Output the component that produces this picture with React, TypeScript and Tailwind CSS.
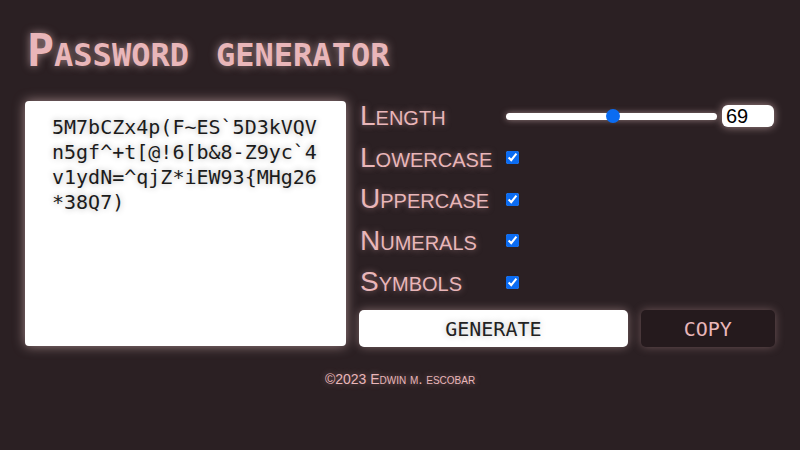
import { useState } from 'react'

const PASSWORD = '5M7bCZx4p(F~ES`5D3kVQVn5gf^+t[@!6[b&8-Z9yc`4v1ydN=^qjZ*iEW93{MHg26*38Q7)'

const OPTIONS = ['Lowercase', 'Uppercase', 'Numerals', 'Symbols']

export default function App() {
    const [length, setLength] = useState(69)

    return (
        <div className="min-h-screen w-full bg-[#2b2023] px-[25px] pt-[28px] text-[#e9b6b9] font-['Liberation_Sans',Arial,sans-serif]">
            <h1 className="pl-[2px] text-[45px] font-bold leading-none [font-variant-caps:small-caps] font-['DejaVu_Sans_Mono',monospace] [text-shadow:0_0_8px_rgba(240,200,202,0.6)]">
                Password generator
            </h1>

            <div className="mt-[28px] flex gap-[13px]">
                <textarea
                    readOnly
                    value={PASSWORD}
                    className="h-[245px] w-[321px] resize-none overflow-hidden rounded-[4px] bg-white pl-[27px] pr-[24px] pt-[14px] text-[20px] leading-[25px] text-[#1b1b1b] break-all outline-none font-['DejaVu_Sans_Mono',monospace] shadow-[0_0_12px_rgba(255,215,215,0.55)] [text-shadow:0_0_6px_rgba(0,0,0,0.3)]"
                />

                <div className="-mt-[6px] flex w-[416px] flex-col">
                    <div className="grid h-[41.5px] grid-cols-[147px_1fr] items-center">
                        <label className="pl-[1px] text-[28px] [font-variant-caps:small-caps] [text-shadow:0_0_6px_rgba(233,182,185,0.5)]">
                            Length
                        </label>
                        <div className="flex items-center gap-[5px]">
                            <input
                                type="range"
                                min={8}
                                max={128}
                                value={length}
                                onChange={(e) => setLength(Number(e.target.value))}
                                className="h-[7px] w-[211px] appearance-none rounded-full bg-white shadow-[0_0_6px_rgba(255,215,215,0.5)] [&::-webkit-slider-thumb]:h-[14px] [&::-webkit-slider-thumb]:w-[14px] [&::-webkit-slider-thumb]:appearance-none [&::-webkit-slider-thumb]:rounded-full [&::-webkit-slider-thumb]:bg-[#0a6cf2]"
                            />
                            <input
                                type="number"
                                value={length}
                                onChange={(e) => setLength(Number(e.target.value))}
                                className="h-[22px] w-[52px] appearance-none rounded-[6px] bg-white pl-[4px] text-[20px] leading-none text-black outline-none shadow-[0_0_8px_rgba(255,215,215,0.6)] [&::-webkit-inner-spin-button]:appearance-none"
                            />
                        </div>
                    </div>

                    {OPTIONS.map((name) => (
                        <div key={name} className="grid h-[41.5px] grid-cols-[147px_1fr] items-center">
                            <label className="pl-[1px] text-[28px] [font-variant-caps:small-caps] [text-shadow:0_0_6px_rgba(233,182,185,0.5)]">
                                {name}
                            </label>
                            <div className="flex items-center">
                                <input type="checkbox" defaultChecked className="h-[13px] w-[13px] accent-[#0b6cf2]" />
                            </div>
                        </div>
                    ))}

                    <div className="mt-[7px] flex gap-[13px]">
                        <button className="h-[37px] flex-[2] rounded-[5px] bg-white pt-[1px] text-[20px] text-[#222] font-['DejaVu_Sans_Mono',monospace] [text-shadow:0_0_6px_rgba(0,0,0,0.25)] shadow-[0_0_10px_rgba(255,215,215,0.4)]">
                            GENERATE
                        </button>
                        <button className="h-[37px] flex-[1] rounded-[5px] bg-[#251a1d] pt-[1px] text-[20px] text-[#e9b6b9] font-['DejaVu_Sans_Mono',monospace] shadow-[0_0_10px_rgba(233,182,185,0.35)]">
                            COPY
                        </button>
                    </div>
                </div>
            </div>

            <footer className="mt-[24px] text-center text-[14px] leading-[17px] [font-variant-caps:small-caps] [text-shadow:0_0_6px_rgba(233,182,185,0.45)]">
                ©2023 Edwin m. escobar
            </footer>
        </div>
    )
}
